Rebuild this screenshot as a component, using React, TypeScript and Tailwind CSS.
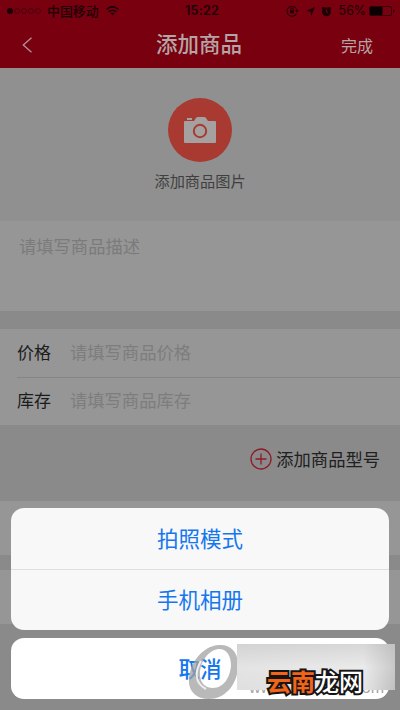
import { ReactNode } from "react";

const StatusBar = () => (
  <div className="relative flex h-[22px] items-center text-[12px] text-[#1c0206]">
    <div className="ml-[7px] flex gap-[1px]">
      <span className="size-[6px] rounded-full bg-[#180104]" />
      {[1, 2, 3, 4].map((dot) => (
        <span
          key={dot}
          className="size-[6px] rounded-full border border-[#4b020c]"
        />
      ))}
    </div>
    <span className="ml-[6px] text-[12.9px] font-medium leading-none">中国移动</span>
    <svg
      className="ml-[7px]"
      width="13"
      height="10"
      viewBox="0 0 13 10"
      fill="none"
      stroke="currentColor"
      strokeWidth="1.7"
    >
      <path d="M.8 3.4C4-.1 9-.1 12.2 3.4M2.9 5.8c2-2.1 5.2-2.1 7.2 0" />
      <path d="M4.4 7.3c1.2-1.1 3-1.1 4.2 0L6.5 9.6z" fill="currentColor" stroke="none" />
    </svg>
    <span className="absolute left-[185px] top-[4px] font-['Inter'] text-[12.5px] font-semibold leading-[14px] tracking-[0.25px]">
      15:22
    </span>
    <div className="ml-auto flex items-center pr-[5px]">
      <svg width="13" height="12" viewBox="0 0 13 12" fill="none" stroke="currentColor">
        <path d="M10.6 8.3A5 5 0 1 1 11 6M9.4 5.2 11 7l1.5-1.8" />
        <path d="M4 5.3h4v3H4z" fill="currentColor" stroke="none" />
        <path d="M4.8 5.3V4.2a1.2 1.2 0 0 1 2.4 0v1.1" />
      </svg>
      <svg className="ml-[7px]" width="9" height="9" viewBox="0 0 9 9" fill="currentColor">
        <path d="M9 0 5.2 9 4.6 4.4 0 4z" />
      </svg>
      <svg className="ml-[6px]" width="11" height="11" viewBox="0 0 11 11" fill="currentColor">
        <circle cx="5.5" cy="5.8" r="4.4" />
        <circle cx="2.6" cy="2.6" r="1.7" />
        <circle cx="8.4" cy="2.6" r="1.7" />
        <path d="M5.500 3.500v2.700H7" fill="none" stroke="#78000f" />
      </svg>
      <span className="ml-[7px] font-['Inter'] text-[12.4px] leading-[14px]">56%</span>
      <svg className="ml-[3px]" width="26" height="10" viewBox="0 0 26 10">
        <rect x=".5" y=".5" width="22" height="9" rx="1.5" fill="none" stroke="#330109" />
        <rect x="1" y="1" width="12.5" height="8" rx="1" fill="#0b0001" />
        <path d="M24 3.200c2 .4 2 3.200 0 3.600z" fill="#330109" />
      </svg>
    </div>
  </div>
);

const Header = () => (
  <header className="h-[68px] bg-[#78000f]">
    <StatusBar />
    <div className="flex h-[46px] items-center justify-between pl-[22px] pr-[27px] text-[#b5a4a5]">
      <svg width="11" height="16" viewBox="0 0 11 16" fill="none" stroke="#b18f93" strokeWidth="1.4">
        <path d="M9.500.8 1.300 8l8.200 7.200" />
      </svg>
      <h1 className="-mt-1 ml-[24px] text-[21.5px] font-medium leading-none">添加商品</h1>
      <button className="text-[16px] leading-none">完成</button>
    </div>
  </header>
);

const Field = ({ label, hint }: { label: string; hint: string }) => (
  <div className="flex h-12 items-center pb-[3px]">
    <label className="w-[53px] text-[17px] leading-none text-[#1c1c1c]">{label}</label>
    <span className="text-[17.3px] leading-none text-[#7d7d7d]">{hint}</span>
  </div>
);

const SheetItem = ({ children }: { children: ReactNode }) => (
  <button className="flex w-full flex-1 items-center justify-center pb-[2px] text-[21.5px] leading-none text-[#1577ee]">
    {children}
  </button>
);

const ActionSheet = () => (
  <div className="absolute inset-x-[11px] top-[508px]">
    <div className="flex h-[122px] flex-col overflow-hidden rounded-[13px] bg-[#f8f8f8]">
      <SheetItem>拍照模式</SheetItem>
      <div className="h-px bg-[#dedfe1]" />
      <SheetItem>手机相册</SheetItem>
    </div>
    <button className="mt-2 flex h-[61px] w-full items-center justify-center rounded-[13px] bg-white pb-[2px] text-[21.5px] font-medium leading-none text-[#1577ee]">
      取消
    </button>
  </div>
);

const Watermark = () => (
  <>
    <svg
      className="absolute left-[188px] top-[644px]"
      width="50"
      height="56"
      viewBox="0 0 50 56"
    >
      <path
        fill="#a2a2a2"
        fillOpacity=".75"
        fillRule="evenodd"
        d="M31 1C43 0 51 9 50 23 49 42 36 55 21 55 8 55 0 47 1 35 2 18 15 2 31 1ZM31 5C20 6 11 19 12 32c1 8 6 12 13 12 11 0 17-11 18-22C43 12 39 5 31 5Z"
      />
      <path
        d="M13 17C7 27 6 39 18 45"
        fill="none"
        stroke="#eeeeee"
        strokeWidth="2"
      />
    </svg>
    <div className="absolute left-[249px] top-[678px] flex w-[135px] justify-between font-['Liberation_Sans'] text-[16px] leading-[19px] text-[#a4a4a4]">
      <span>www.</span>
      <span>.com</span>
    </div>
    <div className="absolute left-[237px] top-[644px] h-[46px] w-[158px] bg-linear-to-r from-[#dddddd] via-[#e8e8e8] via-80% to-[#b0b0b0]">
      <div className="h-full bg-linear-to-b from-[#cccccc]/60 via-[#eeeeee]/40 to-[#e4e4e4]/30" />
    </div>
    <div className="absolute left-[267px] top-[668px] whitespace-nowrap text-[24px] leading-[26px] [paint-order:stroke_fill] [-webkit-text-stroke:4px_#151515]">
      <span className="font-bold text-[#f26418]">云南</span>
      <span className="font-medium text-white">龙网</span>
    </div>
  </>
);

export default function App() {
  return (
    <div className="relative h-[710px] w-[400px] overflow-hidden bg-[#8a8a8a] font-['Noto_Sans_CJK_SC',sans-serif]">
      <Header />
      <section className="flex h-[153px] flex-col items-center bg-[#909090] pt-[30px]">
        <div className="flex size-16 items-center justify-center rounded-full bg-[#a83a31]">
          <svg width="32" height="26" viewBox="0 0 32 26">
            <path
              fill="#a4a1a1"
              d="M1 4h9l2-3q.7-1 2-1h6q1.300 0 2 1l2 3h7q1 0 1 1v20q0 1-1 1H1q-1 0-1-1V5q0-1 1-1ZM3 1h5v2H3Z"
            />
            <circle cx="16" cy="14" r="6.200" fill="none" stroke="#a83a31" strokeWidth="2" />
          </svg>
        </div>
        <p className="mt-[11px] text-[15.2px] leading-none text-[#3f3f3f]">添加商品图片</p>
      </section>
      <section className="h-[90px] bg-[#969696] pl-[19px] pt-[16px] text-[17.3px] leading-none text-[#7b7b7b]">
        请填写商品描述
      </section>
      <section className="mt-[18px] h-24 bg-[#969696] pl-[17px]">
        <Field label="价格" hint="请填写商品价格" />
        <div className="-mb-px h-px bg-[#858585]" />
        <Field label="库存" hint="请填写商品库存" />
      </section>
      <div className="flex h-[76px] items-center justify-end pb-[9px] pr-[20px]">
        <svg width="22" height="22" viewBox="0 0 22 22" fill="none" stroke="#8e1b2a" strokeWidth="1.3">
          <circle cx="11" cy="11" r="10" />
          <path d="M11 5.500v11M5.500 11h11" />
        </svg>
        <span className="ml-1 text-[17.300px] leading-none text-[#202020]">添加商品型号</span>
      </div>
      <section className="h-[54px] bg-[#969696]" />
      <section className="mt-[15px] h-[54px] bg-[#969696]" />
      <ActionSheet />
      <Watermark />
    </div>
  );
}
